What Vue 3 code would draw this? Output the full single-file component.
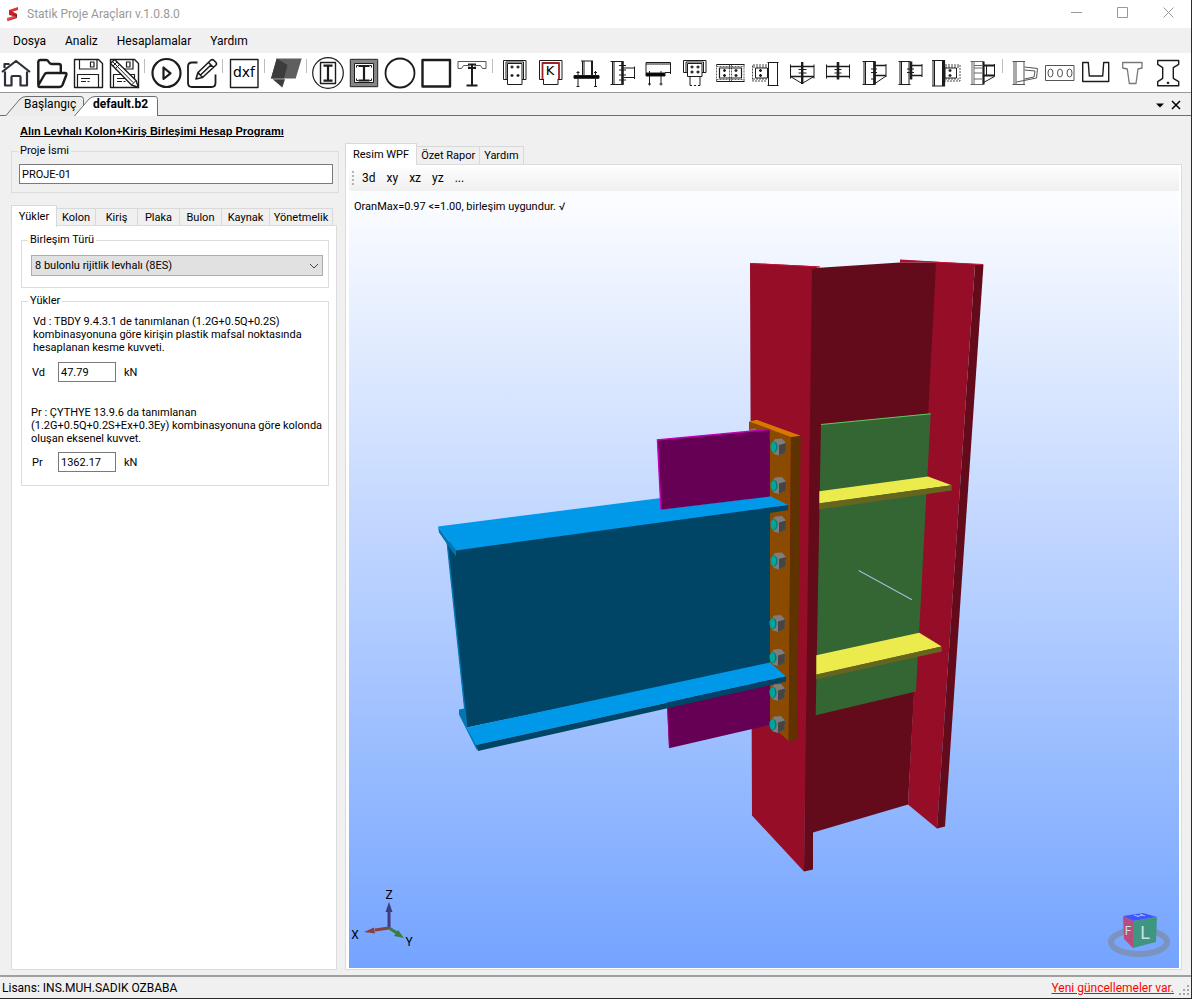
<template>
    <div class="window">
        <header class="title-bar">
            <svg class="logo" viewBox="0 0 14 16" aria-hidden="true">
                <path d="M3 4 12 1v3L6 6l5 2-8 1z" fill="#e03434" />
                <path d="M3 4v5l8 2V8z" fill="#c21f26" />
                <path d="M11 8v4l-9 3 1-3 5-2z" fill="#8c2024" />
                <path d="M1 12l7-2 3 1-10 4z" fill="#ee4340" />
            </svg>
            <span class="title">Statik Proje Araçları v.1.0.8.0</span>
            <button class="win-btn" aria-label="Simge durumuna küçült">
                <svg viewBox="0 0 11 11"><path d="M0 5.500h11" /></svg>
            </button>
            <button class="win-btn" aria-label="Ekranı kapla">
                <svg viewBox="0 0 11 11"><path d="M.5.5h10v10H.5z" /></svg>
            </button>
            <button class="win-btn" aria-label="Kapat">
                <svg viewBox="0 0 11 11"><path d="M.5.5l10 10M10.500.5l-10 10" /></svg>
            </button>
        </header>

        <nav class="menu-bar">
            <button v-for="item in menu" :key="item">{{ item }}</button>
        </nav>

        <div class="tool-bar">
            <template v-for="(tool, i) in tools" :key="i">
                <span v-if="tool === '|'" class="separator"></span>
                <button v-else class="tool" :aria-label="tool.name">
                    <svg viewBox="0 0 32 32">
                        <path
                            v-for="(p, j) in tool.paths"
                            :key="j"
                            :d="p.d"
                            :fill="p.fill || 'none'"
                            :stroke="p.stroke || '#1c1c1c'"
                            :stroke-width="p.w ?? 1"
                            :stroke-dasharray="p.dash"
                            stroke-linejoin="round"
                        />
                        <text v-if="tool.text" x="16" :y="tool.textY" :font-size="tool.size" text-anchor="middle">{{ tool.text }}</text>
                    </svg>
                </button>
            </template>
        </div>

        <div class="doc-tabs">
            <button class="doc-tab first">
                <svg viewBox="0 0 79 20"><path d="M.5 20 15 3q3-2.500 6-2.500h55q2.500 0 2.500 3V20" fill="#ececec" /></svg>
                <span>Başlangıç</span>
            </button>
            <button class="doc-tab current">
                <svg viewBox="0 0 84 20"><path d="M.5 20 15 3q3-2.500 6-2.500h60q2.500 0 2.500 3V20" fill="#fff" /></svg>
                <span>default.b2</span>
            </button>
            <span class="spacer"></span>
            <button class="strip-btn" aria-label="Belgeler">
                <svg viewBox="0 0 10 10"><path d="M1 3.500h8l-4 4z" fill="#000" /></svg>
            </button>
            <button class="strip-btn" aria-label="Belgeyi kapat">
                <svg viewBox="0 0 10 10"><path d="M1 1l8 8M9 1 1 9" stroke="#000" stroke-width="1.500" /></svg>
            </button>
        </div>

        <main class="content">
            <section class="side">
                <h1>Alın Levhalı Kolon+Kiriş Birleşimi Hesap Programı</h1>

                <fieldset class="group project">
                    <legend id="project-label">Proje İsmi</legend>
                    <input v-model="project" type="text" aria-labelledby="project-label" />
                </fieldset>

                <div class="tabs side-tabs" role="tablist">
                    <button
                        v-for="tab in sideTabs"
                        :key="tab"
                        role="tab"
                        :class="{ active: tab === sideTab }"
                        @click="sideTab = tab"
                    >{{ tab }}</button>
                </div>

                <div class="page side-page">
                    <fieldset class="group type-group">
                        <legend id="type-label">Birleşim Türü</legend>
                        <div class="select-wrap">
                            <select v-model="jointType" aria-labelledby="type-label">
                                <option>8 bulonlu rijitlik levhalı (8ES)</option>
                            </select>
                            <svg viewBox="0 0 10 6" aria-hidden="true"><path d="M1 1l4 4 4-4" /></svg>
                        </div>
                    </fieldset>

                    <fieldset class="group loads">
                        <legend>Yükler</legend>
                        <p>Vd : TBDY 9.4.3.1 de tanımlanan (1.2G+0.5Q+0.2S) kombinasyonuna göre kirişin plastik mafsal noktasında hesaplanan kesme kuvveti.</p>
                        <div class="load-row">
                            <label for="vd">Vd</label>
                            <input id="vd" v-model="vd" type="text" />
                            <span>kN</span>
                        </div>
                        <p class="second">Pr : ÇYTHYE 13.9.6 da tanımlanan (1.2G+0.5Q+0.2S+Ex+0.3Ey) kombinasyonuna göre kolonda oluşan eksenel kuvvet.</p>
                        <div class="load-row">
                            <label for="pr">Pr</label>
                            <input id="pr" v-model="pr" type="text" />
                            <span>kN</span>
                        </div>
                    </fieldset>
                </div>
            </section>

            <section class="view">
                <div class="tabs view-tabs" role="tablist">
                    <button
                        v-for="tab in viewTabs"
                        :key="tab"
                        role="tab"
                        :class="{ active: tab === viewTab }"
                        @click="viewTab = tab"
                    >{{ tab }}</button>
                </div>

                <div class="page view-page">
                    <div class="view-tools">
                        <span class="grip"></span>
                        <button v-for="v in ['3d', 'xy', 'xz', 'yz', '...']" :key="v">{{ v }}</button>
                    </div>

                    <div class="stage">
                        <svg class="model" viewBox="349 191 830 776" aria-label="Birleşim modeli">
                            <!-- column -->
                            <path fill="#640b1b" d="M808 268 900 262 938 262 908 804 813 832 813 869 804 871z" />
                            <path fill="#950d27" d="M900 259 983 264 975 264 937 828 908 804 936 262 900 262z" />
                            <path fill="#640b1b" d="M975 264 983.500 264 945 826 937 828z" />
                            <path fill="#950d27" d="M750 262.500 820 266 812 269 804 871 752 815z" />
                            <path stroke="#c41034" fill="none" d="M750 263 820 266.500M900 260l83 4" />
                            <!-- doubler plate and stiffeners -->
                            <path fill="#336633" d="M821 424 930.700 413 916 691 815.700 714.700z" />
                            <path stroke="#62c962" fill="none" d="M821 424 930.700 413.300" />
                            <path fill="#ebeb4d" d="M819.300 490.700 928 476 951.700 484.700 819.300 503z" />
                            <path fill="#66651f" d="M819.300 502.700 951.700 484.700V490L819 509z" />
                            <path fill="#ebeb4d" d="M816.300 654.700 919.300 632.300 941.700 646 816.300 674.300z" />
                            <path fill="#66651f" d="M816.300 674 941.700 646v5L816 679z" />
                            <path stroke="#9fb9d4" stroke-width="1.300" d="M858.700 570 912 599.300" />
                            <!-- end plate -->
                            <path fill="#8a4a00" d="M749 421 791 436 788.700 740.500 770 724V440L749 430z" />
                            <path fill="#5e3300" d="M791 436 800.700 435.300 797 738.700 788.700 741z" />
                            <path fill="#d97700" d="M749 421 756.700 419.300 800.700 435.300 791 436.500z" />
                            <path fill="#777" d="M750 428.500l6-.7v1.700l-6 .7z" />
                            <!-- beam -->
                            <path fill="#660055" d="M667 700 770 680V724.300L669 747.700z" />
                            <path stroke="#a0008c" fill="none" d="M667.500 707 669.500 747" />
                            <path fill="#004466" d="M447 541 788 504.500V509.500L770 512.500V664L466.500 727z" />
                            <path fill="#0077b5" d="M446.500 542l1.500 0 19.500 185-1.500 0z" />
                            <path fill="#0077b5" d="M438 526 456 550V556L448 545 439 532z" />
                            <path fill="#0099ea" d="M438 526 661 497.500V509L770 495.500 788 504.500 456 550z" />
                            <path fill="#0077b5" d="M459 709 464.500 708 467 727 477 744V750L459 714z" />
                            <path fill="#0099ea" d="M467 727 770 662 786 676 476 744.500z" />
                            <path fill="#004466" d="M476 744.500 786 676V681L478 750.500z" />
                            <path fill="#660055" d="M657.300 439.300 769.700 429V496L661 509.300z" />
                            <path stroke="#c400b4" stroke-width="1.500" fill="none" d="M661 509 657.500 439.500 769.700 429" />
                            <!-- bolts -->
                            <g v-for="(b, i) in bolts" :key="i" :transform="`translate(${b[0]} ${b[1]})`">
                                <path fill="#7d7d7d" d="M-7.500-2-3-8 4-8.500 8-4 7 5 1 8.500-4 7-7 3z" />
                                <path fill="#454545" d="M1-2 8-4 7.500 5 1 8.500z" />
                                <ellipse cx="-4" cy="0" rx="3.500" ry="5.500" fill="#007a74" />
                                <ellipse cx="-4.500" cy="0" rx="2.500" ry="5" fill="#00a69c" />
                            </g>
                        </svg>

                        <p class="result">OranMax=0.97 &lt;=1.00, birleşim uygundur. √</p>

                        <svg class="axes" viewBox="0 0 66 70" aria-hidden="true">
                            <path d="M38 46V27" stroke="#403c80" stroke-width="3" />
                            <path d="M38 20l3.500 10h-7z" fill="#403c80" />
                            <path d="M38 46 24 48" stroke="#8c3f3f" stroke-width="3" />
                            <path d="M13 50l10-4.500 1 6z" fill="#8c3f3f" />
                            <path d="M38 46l8 5" stroke="#3c7d3c" stroke-width="3" />
                            <path d="M53 56l-10-2 4-6z" fill="#3c7d3c" />
                            <text x="38" y="17">Z</text>
                            <text x="4" y="57">X</text>
                            <text x="58" y="64">Y</text>
                        </svg>

                        <svg class="cube" viewBox="0 0 64 48" aria-hidden="true">
                            <ellipse cx="32" cy="31" rx="28" ry="12" fill="none" stroke="#7c93bd" stroke-width="6" />
                            <path d="M16 5 36 2 50 6 26 10z" fill="#4055ff" />
                            <path d="M16 5 26 10V37L17 28z" fill="#b84c7a" />
                            <path d="M26 10 50 6 49 31 26 37z" fill="#3f9680" />
                            <path d="M27 4l5 1.500M33 3l5 2M30 5.500l6-1.500" stroke="#a9b8ff" fill="none" />
                            <text class="face-l" x="38" y="28">L</text>
                            <text class="face-f" x="21" y="24">F</text>
                        </svg>
                    </div>
                </div>
            </section>
        </main>

        <footer class="status-bar">
            <span>Lisans: INS.MUH.SADIK OZBABA</span>
            <a href="#">Yeni güncellemeler var.</a>
            <svg class="size-grip" viewBox="0 0 12 12" aria-hidden="true">
                <path d="M8 0h2v2H8zM8 4h2v2H8zM4 4h2v2H4zM8 8h2v2H8zM4 8h2v2H4zM0 8h2v2H0z" fill="#a8a8a8" />
            </svg>
        </footer>
    </div>
</template>

<script setup>
import { ref } from 'vue';

const menu = ['Dosya', 'Analiz', 'Hesaplamalar', 'Yardım'];
const sideTabs = ['Yükler', 'Kolon', 'Kiriş', 'Plaka', 'Bulon', 'Kaynak', 'Yönetmelik'];
const viewTabs = ['Resim WPF', 'Özet Rapor', 'Yardım'];

const sideTab = ref('Yükler');
const viewTab = ref('Resim WPF');
const project = ref('PROJE-01');
const jointType = ref('8 bulonlu rijitlik levhalı (8ES)');
const vd = ref('47.79');
const pr = ref('1362.17');

const bolts = [
    [778, 446.5], [778, 485], [778, 524], [778, 560.5],
    [777, 623], [777, 657], [777, 692], [777, 724]
];

// small plus signs that mark bolts
const crosses = (xs, ys) => xs.flatMap(x => ys.map(y => `M${x - 1.5} ${y}h3M${x} ${y - 1.5}v3`)).join('');

const floppy = [
    { d: 'M2.5 2.5h24l4 4v24h-28z', w: 1.4 },
    { d: 'M7.5 2.5v9.500h17.500v-9.500M18.500 5h3.500v5h-3.500zM5.500 30.500V17.500h21v13', w: 1.2 },
    { d: 'M9 21.500h9M9 24.500h5M15.500 24.500h2' }
];

const tools = [
    { name: 'Başlangıç', paths: [
        { d: 'M2 15 16 4l14 11M4.500 11V7h5M5 14.500V28.500h6.500V20q0-1 1-1h7q1 0 1 1v8.500H27V14.500', stroke: '#2b303b', w: 2.2 }
    ] },
    { name: 'Aç', paths: [
        { d: 'M2.300 28V5q0-2 2-2h6q1.500 0 2.500 2t3 2h7q2 0 2 2v6.500M2.500 28 8.500 17.500q.7-1.500 2.500-1.500h18q2 0 1.300 2L26.500 28q-1 2-3 2H4q-2 0-1.500-2z', w: 2.4 }
    ] },
    { name: 'Kaydet', paths: floppy },
    { name: 'Farklı kaydet', paths: [
        ...floppy,
        { d: 'M2.500 6.500 6.500 2.500 28 23.500 30.500 30.500 23.500 28z', fill: '#fff', w: 1.4 },
        { d: 'M5 9 9 5M7.500 11.500l4-4M23.500 28l4.500-4.500M5 5l20 20.500' }
    ] },
    '|',
    { name: 'Çalıştır', paths: [
        { d: 'M2.500 16a14 14 0 1 0 28 0a14 14 0 1 0-28 0M13.500 10.500v11.500l7-5.700z', w: 2.2 }
    ] },
    { name: 'Düzenle', paths: [
        { d: 'M11.500 5.500H6q-4 0-4 4V26q0 4 4 4h19.500q4 0 4-4V17.500', w: 1.8 },
        { d: 'M10 22l2-6.500L25 3q1.500-1 3 .5l2 2q1 1.300 0 2.500L16.500 20.500zM12 15.500l4.500 5M22.500 5.500l5 5M14.500 18 25.500 7.500', w: 1.6 }
    ] },
    '|',
    { name: 'dxf', text: 'dxf', textY: 20, size: 14, paths: [{ d: 'M2.500 2.500h27.500v28h-27.500z', w: 1.4 }] },
    '|',
    { name: 'Görünüm', paths: [
        { d: 'M6.700 1.500H31.700L25.700 21.500H1z', fill: '#5f5f5f', w: 0 },
        { d: 'M6.700 1.500 17.500 8 14 21.500H1z', fill: '#3c3c3c', w: 0 },
        { d: 'M2.700 22.300H15L12.300 30.500z', fill: '#3c3c3c', w: 0 }
    ] },
    '|',
    { name: 'Dairesel kolon', paths: [
        { d: 'M.7 16a15.300 15.300 0 1 0 30.600 0a15.300 15.300 0 1 0-30.600 0', w: 1.2 },
        { d: 'M8.500 5.500h15v21h-15z', w: 1.4 },
        { d: 'M11.500 8.700h9M11.500 23.700h9M16 8.700v15', w: 2.2 }
    ] },
    { name: 'Kompozit kolon', paths: [
        { d: 'M4.500 4.500h23v23h-23z', w: 4, stroke: '#858585' },
        { d: 'M2.300 2.300h27.400v27.400H2.300zM6.500 6.500h19v19h-19z' },
        { d: 'M10.500 9h11M10.500 23.500h11M16 9v14.500', w: 2.2 },
        { d: 'M8.500 10.500v-2h2M21.500 8.500h2v2M23.500 21.500v2h-2M10.500 23.500h-2v-2' }
    ] },
    { name: 'Daire', paths: [{ d: 'M1.500 16a14.500 14.500 0 1 0 29 0a14.500 14.500 0 1 0-29 0', w: 1.8 }] },
    { name: 'Kare', paths: [{ d: 'M2.500 3h27.500v26.500h-27.500z', w: 2.4 }] },
    { name: 'Kompozit kiriş', paths: [
        { d: 'M2 4.500h28v7h-3.500l-2-3h-5l-1 2.500h-5l-1-2.500h-5l-2 3H2z', stroke: '#555' },
        { d: 'M12 7.500h8M10.500 28.500h11M16 7.500v21M12 11h8', w: 2 }
    ] },
    '|',
    { name: 'Levha', paths: [
        { d: 'M9.500 22.500h-4v-19h22.500v19h-4M9.500 6.500h14.500v21H9.500zM8 22.500V5h17.500v17.500' },
        { d: crosses([14, 20], [10, 18.5]), w: 1.3 }
    ] },
    { name: 'Kaynaklı levha', text: 'K', textY: 17.5, size: 13, paths: [
        { d: 'M9.500 22.500h-4v-19h22.500v19h-4' },
        { d: 'M8.500 22V6h16.500V22', stroke: '#9b2226', w: 1.8 },
        { d: 'M9.500 22v5.500h14.500V22' }
    ] },
    { name: 'Kolon ayağı', paths: [
        { d: 'M4 18.500h25v2.800H4z', fill: '#000' },
        { d: 'M11 4h12M12.500 4v14.500M14 4v14.500M21.500 4v14.500M22.500 4v14.500M8 14v15.500M25.500 14v15.500M6.500 15.500h3M24 15.500h3M6.500 29.500h3M24 29.500h3' }
    ] },
    { name: 'Kolon kiriş', paths: [
        { d: 'M4.500 4.500h13M4.500 27.500h13M6.500 4.500v23M8 4.500v23M17.500 11h11M17.500 20.500h11M28.500 9.500v12.500' },
        { d: 'M16.500 4.500v23', w: 2.6 },
        { d: 'M13 8.500h7M13 13h7M13 18h7M13 23h7' }
    ] },
    { name: 'Konsol', paths: [
        { d: 'M4 16V5.500h24.500V17M4 7h24.500M23 15.500h5.500M7.500 14v14.500M19 14v14.500M6 27h3M17.500 27h3' },
        { d: 'M4 16h19v3H4z', fill: '#000' }
    ] },
    { name: 'Gövde levhası', paths: [
        { d: 'M9.500 15.500h-4v-12h22.500v12h-4M9.500 19.500v-13h14.500v13zM8 15.500V5h17.500v10.500M12 19.500v9M22 19.500v9' },
        { d: 'M12 28.500h10', dash: '2 2' },
        { d: crosses([14, 20], [10, 15]), w: 1.3 }
    ] },
    { name: 'Kiriş eki', paths: [
        { d: 'M2.500 7.500h28M2.500 24.500h28M5.500 11h22v10h-22z', w: 1.2 },
        { d: 'M2.500 7.500v17M30 7.500v17M15.500 7.500v17M17.500 7.500v17M2.500 9.500h28M2.500 22.500h28', dash: '2 1', w: .7 },
        { d: crosses([10.5, 22], [13.5, 18.5]), w: 1.3 }
    ] },
    { name: 'Kayma levhası', paths: [
        { d: 'M17.500 5.500h11M17.500 28.500h11M18.500 5.500v23M27.500 5.500v23M5.500 11h12v10h-12z' },
        { d: 'M17 8H2.500v16H17M17 10H2.500M17 22H2.500', dash: '2 1', w: .8 },
        { d: crosses([10.5], [13.5, 18.5]), w: 1.3 }
    ] },
    { name: 'Mahya', paths: [
        { d: 'M16.200 5v22', w: 2.4 },
        { d: 'M4.500 9.500h23.500M4.500 19.500h23.500', w: 1.6 },
        { d: 'M4.500 7.500v14M28 7.500v14M4.500 19.500 16 26.500 28 19.500M12.500 12.500h8M12.500 16h8' }
    ] },
    { name: 'Alın levhalı ek', paths: [
        { d: 'M16 5v17.500', w: 2.6 },
        { d: 'M4.500 9.500h23M4.500 19.500h23', w: 1.5 },
        { d: 'M4.500 7.500v14M27.500 7.500v14M12.500 12.500h7M12.500 16h7' }
    ] },
    { name: 'Guseli birleşim', paths: [
        { d: 'M4.500 4.500h13M4.500 27.500h13M6 4.500v23M7.500 4.500v23M28 7v13M28 19 17 26.500M13 12h6M13 15.500h6M13 22h5' },
        { d: 'M16.500 4.500v23', w: 2.8 },
        { d: 'M17 8.500h11M17 18.500h11', w: 1.6 }
    ] },
    { name: 'Alın levhalı birleşim', paths: [
        { d: 'M4.500 4.500h12M4.500 27.500h12M6 4.500v23M7.500 4.500v23M15 4.500v23M28 7v13M13 12h7M13 15.500h7' },
        { d: 'M17 4.500v18', w: 2.6 },
        { d: 'M17 8.500h11M17 18.500h11', w: 1.6 }
    ] },
    { name: 'Kayma birleşimi', paths: [
        { d: 'M2 3.500h13M2 29h13M3 3.500V29M4.500 3.500V29M12.500 3.500V29M15 11h11.500v10H15z' },
        { d: 'M14 3.500V29', w: 2.2 },
        { d: 'M15 8h15v16H15M15 10h15M15 22h15', dash: '2 1', w: .8 },
        { d: crosses([20], [13.5, 18.5]), w: 1.3 }
    ] },
    { name: 'Güçlendirilmiş birleşim', paths: [
        { d: 'M4.500 4.500h13M4.500 27.500h13M6 4.500v23M8 4.500v23M8 8.500h8M8 11h8M8 16h8M8 22h8', stroke: '#666' },
        { d: 'M17.500 4.500v23', w: 2.2 },
        { d: 'M17.500 8.500h11M17.500 18.500h11', w: 1.8 },
        { d: 'M28.500 7v12.500L17.500 25.500M20.500 8.500v10' }
    ] },
    '|',
    { name: 'Gergi', paths: [
        { d: 'M4.500 4.500h12.500M4.500 27.500h12.500M6 4.500v23M8 4.500v23M16 4.500v23M16.500 10l13 1.500-1 9.500-20 4M16.500 13l10.500 1-1 6-9.500 2', stroke: '#555' }
    ] },
    { name: 'Boşluklu kiriş', paths: [
        { d: 'M1.500 8.500h28.500v15H1.500z', stroke: '#555' },
        { d: 'M4 16a2.500 4 0 1 0 5 0a2.500 4 0 1 0-5 0M13.500 16a2.500 4 0 1 0 5 0a2.500 4 0 1 0-5 0M23 16a2.500 4 0 1 0 5 0a2.500 4 0 1 0-5 0', stroke: '#555' }
    ] },
    { name: 'U kesit', paths: [{ d: 'M2.700 5.500H8.300L9.300 19H22.700L23.700 5.500H28.700V24.500H2.700z', w: 1.4 }] },
    { name: 'T kesit', paths: [{ d: 'M6.700 5.500H26V11L22 12 20 26.500H13.300L11.300 12 6.700 11z', stroke: '#777', w: 1.3 }] },
    { name: 'I kesit', paths: [
        { d: 'M5.700 3.500H26.700V7.300L21.300 10.700V21.300L26.700 24.700V28.700H5.700V24.700L10.700 21.300V10.700L5.700 7.300z', w: 1.4 },
        { d: 'M15.500 25.500h1v.7h-1z', w: 1.4, fill: '#000' }
    ] }
];
</script>

<style>
body {
    background: #f0f0f0;
}
</style>

<style scoped>
.window {
    display: flex;
    flex-direction: column;
    box-sizing: border-box;
    height: 100vh;
    min-height: 640px;
    border-right: 1px solid #2b2b2b;
    border-bottom: 1px solid #2b2b2b;
    background: #f0f0f0;
    color: #000;
    font-family: Roboto, "Liberation Sans", sans-serif;
    font-size: 11px;
    overflow: hidden;
}

button {
    padding: 0;
    border: none;
    background: none;
    color: inherit;
    font: inherit;
}

.title-bar {
    display: flex;
    align-items: center;
    flex: 0 0 28px;
    background: #fff;
    color: #999;
    font-size: 12px;
}

.logo {
    width: 14px;
    height: 16px;
    margin: 0 7px 0 6px;
}

.title {
    flex: 1;
}

.win-btn {
    width: 46px;
    height: 27px;
}

.win-btn svg {
    width: 11px;
    height: 11px;
    fill: none;
    stroke: #999;
}

.menu-bar {
    display: flex;
    align-items: center;
    gap: 19px;
    flex: 0 0 25px;
    padding-left: 13px;
    font-size: 12px;
}

.tool-bar {
    display: flex;
    align-items: center;
    gap: 4px;
    flex: 0 0 39px;
    border-bottom: 1px solid #999;
    background: #fff;
    overflow: hidden;
}

.tool {
    flex: 0 0 32px;
    height: 32px;
}

.tool svg {
    display: block;
    width: 32px;
    height: 32px;
    font-family: "DejaVu Sans", sans-serif;
}

.separator {
    flex: 0 0 1px;
    height: 14px;
    margin: 0 1px 14px 0;
    background: #bdbdbd;
}

.doc-tabs {
    display: flex;
    align-items: flex-end;
    flex: 0 0 22px;
    padding: 0 7px 0 5px;
    border-bottom: 1px solid #6d6d6d;
    font-size: 12px;
}

.doc-tab {
    display: grid;
    height: 19px;
    line-height: 17px;
    text-align: left;
}

.doc-tab > * {
    grid-area: 1 / 1;
}

.doc-tab svg {
    height: 20px;
    stroke: #6d6d6d;
}

.first svg {
    width: 79px;
}

.doc-tab span {
    padding-left: 19px;
}

.current {
    margin-left: -10px;
    font-weight: bold;
}

.current svg {
    width: 84px;
}

.spacer {
    flex: 1;
}

.strip-btn {
    width: 16px;
    height: 19px;
}

.strip-btn svg {
    width: 10px;
    height: 10px;
}

.content {
    display: flex;
    flex: 1;
    min-height: 0;
    padding: 0 9px 5px 11px;
}

.side {
    display: flex;
    flex-direction: column;
    flex: 0 0 334px;
}

h1 {
    margin: 8px 0 6px 9px;
    font-family: "Liberation Sans", Arial, sans-serif;
    font-size: 11px;
    line-height: 14px;
    text-decoration: underline;
    white-space: nowrap;
}

.group {
    min-width: 0;
    margin: 0;
    border: 1px solid #dcdcdc;
}

legend {
    padding: 0 2px;
    line-height: 14px;
}

input {
    box-sizing: border-box;
    height: 20px;
    padding: 0 2px;
    border: 1px solid #7a7a7a;
    background: #fff;
    color: #000;
    font: inherit;
}

.project {
    margin-right: 6px;
    padding: 6px 5px 8px 7px;
}

.project legend {
    margin-left: -1px;
}

.project input {
    display: block;
    width: 100%;
}

.tabs {
    display: flex;
    align-items: flex-end;
    height: 20px;
}

.tabs button {
    box-sizing: border-box;
    height: 18px;
    border: 1px solid #d9d9d9;
    border-width: 1px 1px 0 0;
    white-space: nowrap;
}

.tabs .active {
    z-index: 1;
    height: 22px;
    margin-bottom: -1px;
    border-left-width: 1px;
    background: #fff;
}

.side-tabs {
    display: grid;
    grid-template-columns: 46px 39px 42px 42px 42px 48px 63px;
    margin-top: 12px;
}

.page {
    display: flex;
    flex-direction: column;
    flex: 1;
    min-height: 0;
    border: 1px solid #dcdcdc;
    background: #fff;
}

.side-page {
    gap: 6px;
    margin-right: 8px;
    padding: 7px 7px 0 9px;
}

.side-page legend {
    margin-left: -3px;
}

.type-group {
    padding: 8px 5px 11px 9px;
}

.select-wrap {
    position: relative;
}

select {
    display: block;
    appearance: none;
    width: 100%;
    height: 21px;
    padding: 0 20px 0 3px;
    border: 1px solid #adadad;
    border-radius: 0;
    background: #e1e1e1;
    color: #000;
    font: inherit;
}

.select-wrap svg {
    position: absolute;
    top: 8px;
    right: 4px;
    width: 10px;
    height: 6px;
    fill: none;
    stroke: #444;
    pointer-events: none;
}

.loads {
    padding: 7px 4px 13px 9px;
}

.loads p {
    margin: 0 0 8px;
    padding-left: 2px;
    line-height: 13px;
}

.loads .second {
    margin-top: 24px;
    margin-bottom: 7px;
    padding-left: 0;
}

.load-row {
    display: flex;
    align-items: center;
}

.load-row label {
    width: 26px;
    padding-left: 1px;
}

.load-row input {
    width: 58px;
    margin-right: 8px;
}

.view {
    display: flex;
    flex-direction: column;
    flex: 1;
    min-width: 0;
    padding-top: 28px;
}

.view-tabs button {
    padding: 0 4px;
}

.view-tabs .active {
    padding: 0 7px;
}

.view-page {
    padding: 2px 2px 1px 3px;
}

.view-tools {
    display: flex;
    align-items: center;
    gap: 11px;
    box-sizing: border-box;
    flex: 0 0 24px;
    padding-bottom: 2px;
    border-radius: 0 0 0 3px;
    background: linear-gradient(#fdfdfd, #f0f0f0);
    font-size: 12px;
}

.grip {
    width: 2px;
    height: 14px;
    margin: 0 -3px 0 3px;
    background: repeating-linear-gradient(#b5b5b5 0 2px, transparent 2px 4px);
}

.stage {
    position: relative;
    flex: 1;
    min-height: 0;
    background: linear-gradient(#fcfdff, #74a4ff);
}

.model {
    display: block;
    width: 100%;
    height: 100%;
}

.result {
    position: absolute;
    top: 9px;
    left: 5px;
    margin: 0;
    line-height: 14px;
}

.axes {
    position: absolute;
    bottom: 16px;
    left: 2px;
    width: 66px;
    height: 70px;
    font-size: 12px;
    text-anchor: middle;
}

.cube {
    position: absolute;
    right: 8px;
    bottom: 9px;
    width: 64px;
    height: 48px;
    fill: #cfe0e8;
    text-anchor: middle;
}

.face-l {
    font-size: 18px;
}

.face-f {
    font-size: 12px;
}

.status-bar {
    display: flex;
    align-items: center;
    flex: 0 0 21px;
    padding-left: 2px;
    border-top: 2px solid #a0a0a0;
    font-size: 12px;
}

.status-bar a {
    margin-left: auto;
    color: #f00;
}

.size-grip {
    align-self: flex-end;
    width: 12px;
    height: 12px;
    margin: 0 0 1px 5px;
}
</style>
